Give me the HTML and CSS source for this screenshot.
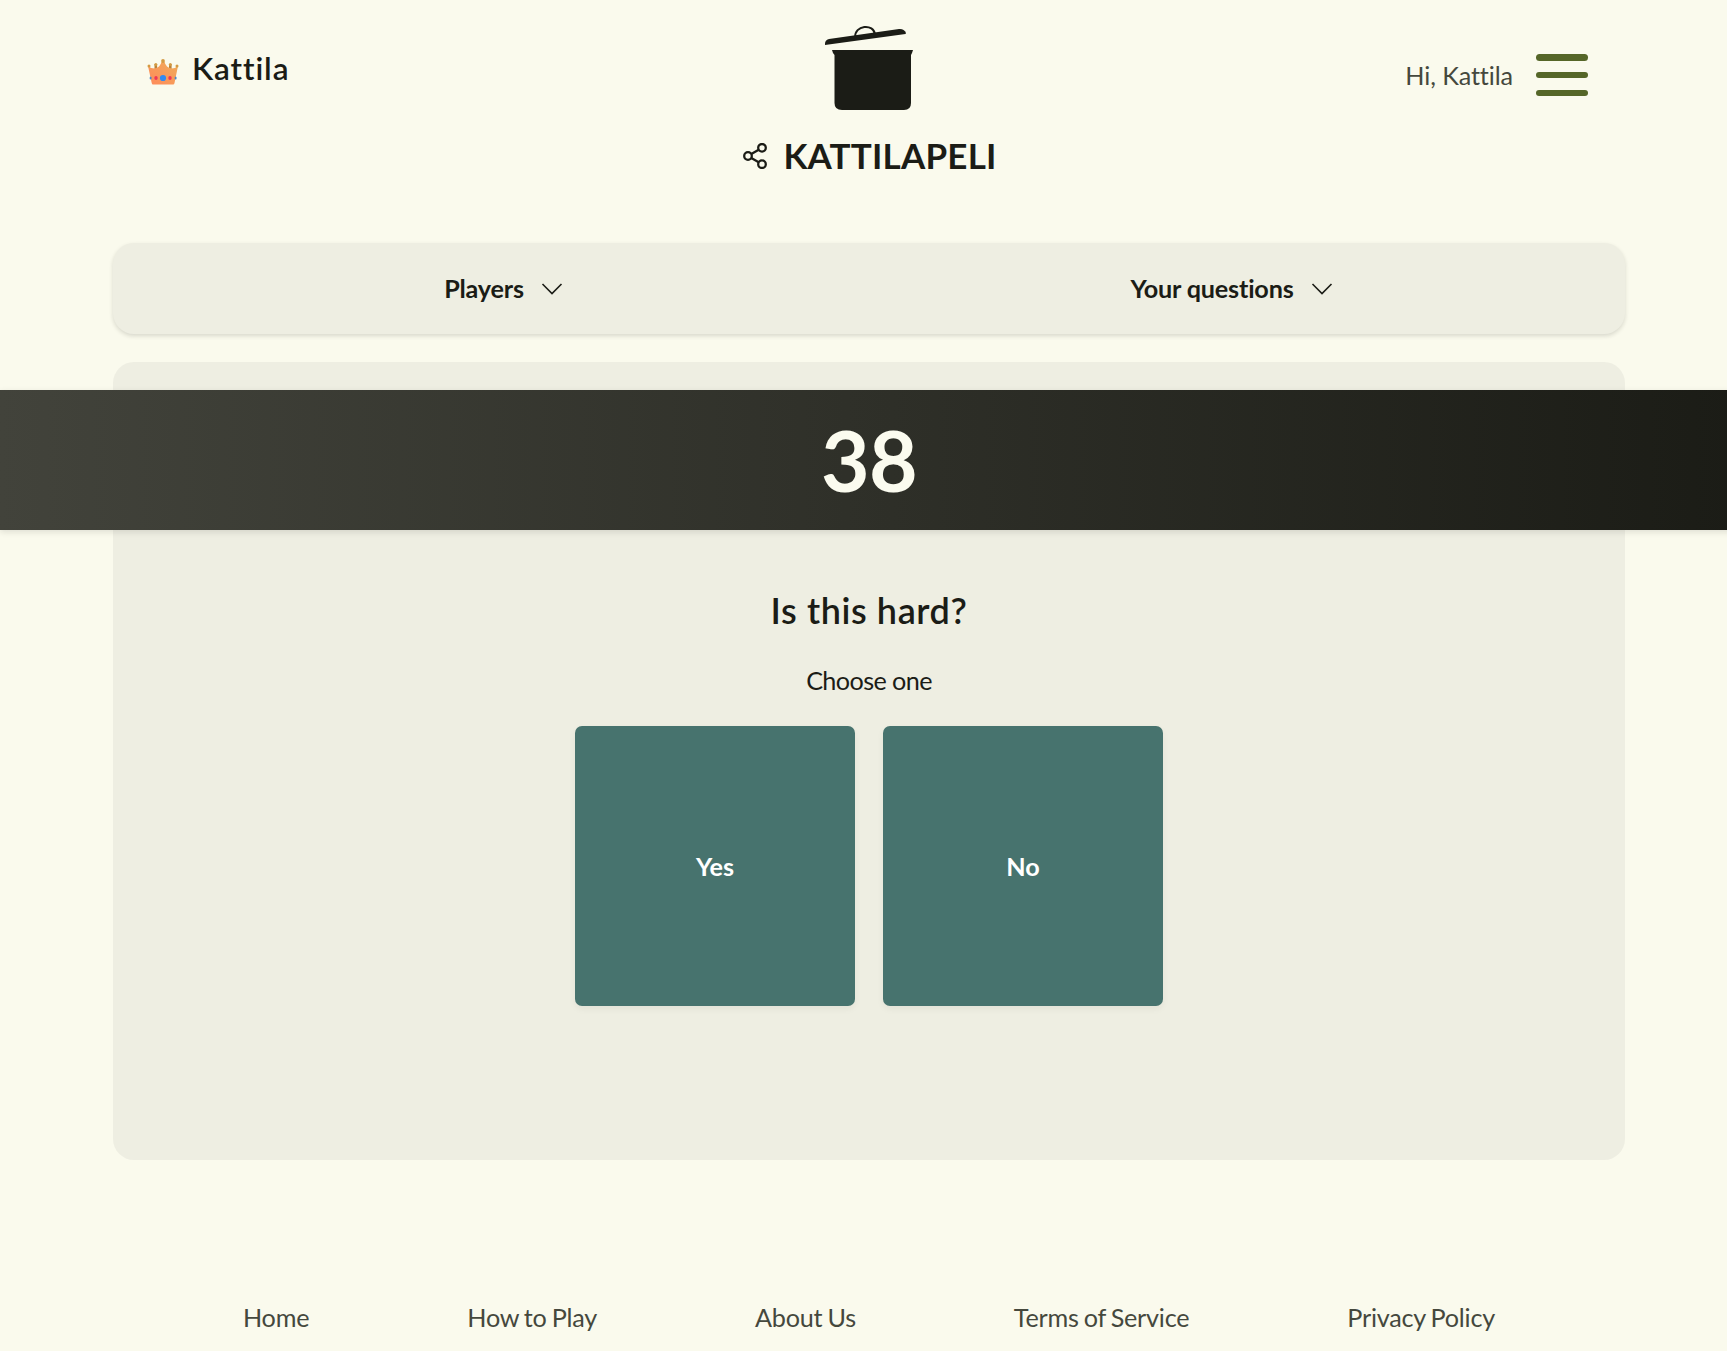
FILE: index.html
```
<!DOCTYPE html>
<html lang="en">
<head>
    <meta charset="UTF-8">
    <meta name="viewport" content="width=device-width, initial-scale=1.0">
    <title>Kattilapeli</title>
    <link rel="stylesheet" href="styles.css">
</head>
<body>
    <div class="container">
        <header class="header">
            <div class="host">
                <svg class="crown" viewBox="0 0 32 28">
                    <defs>
                        <linearGradient id="gold" x1="0" y1="1" x2="1" y2="0">
                            <stop offset="0" stop-color="#ff8a5c"/>
                            <stop offset="1" stop-color="#f0ac58"/>
                        </linearGradient>
                    </defs>
                    <path fill="#b98239" d="M7.500 6h2.600v7H7.500zM22 6h2.600v7H22z"/>
                    <path fill="url(#gold)" d="M1 8Q4 10.500 7.500 10.500Q13 9.500 14.500 4H17.500Q19 9.500 24.500 10.500Q28 10.500 31 8L27.500 25Q27.300 26.500 26 26.500H6Q4.900 26.500 4.700 25Z"/>
                    <g fill="#d39b43"><circle cx="16" cy="3" r="1.900"/><circle cx="8.800" cy="6.500" r="1.500"/><circle cx="23.300" cy="6.500" r="1.500"/><circle cx="2" cy="8" r="1.500"/><circle cx="30" cy="8" r="1.500"/></g>
                    <circle cx="16" cy="20" r="3.100" fill="#338af0"/>
                    <g fill="#ef3658"><ellipse cx="9" cy="20" rx="1.700" ry="2"/><ellipse cx="23" cy="20" rx="1.700" ry="2"/></g>
                    <g fill="#4b86c8"><ellipse cx="3.600" cy="20" rx="1" ry="1.600"/><ellipse cx="28.600" cy="20" rx="1" ry="1.600"/></g>
                </svg>
                <h2 class="host-name">Kattila</h2>
            </div>
            <div class="brand">
                <svg class="pot" viewBox="0 0 90 88">
                    <path d="M1 21Q.5 16 5 15L75 5Q80 4.500 82 9L81.500 10Z"/>
                    <path class="pot-handle" d="M31.200 13.500C30 1 50 -1 51 10.500"/>
                    <path d="M8 26H89L88 29 87 31V79Q87 86 80 86H18Q10.500 86 10.500 79V31L9 29Z"/>
                </svg>
                <div class="title-row">
                    <svg class="share" viewBox="0 0 24 26">
                        <circle cx="5" cy="13" r="3.800"/>
                        <circle cx="19" cy="4.800" r="3.800"/>
                        <circle cx="19" cy="21.200" r="3.800"/>
                        <path d="M8.300 11 15.700 6.700M8.300 15l7.400 4.300"/>
                    </svg>
                    <h1 class="title">KATTILAPELI</h1>
                </div>
            </div>
            <div class="user">
                <span class="greeting">Hi, Kattila</span>
                <button class="menu-btn" aria-label="Menu">
                    <span></span>
                    <span></span>
                    <span></span>
                </button>
            </div>
        </header>

        <nav class="tabs">
            <div class="tab">
                <span>Players</span>
                <svg class="chevron" viewBox="0 0 28 28"><path d="M4.500 9 14 18.500l9.500-9.500"/></svg>
            </div>
            <div class="tab">
                <span>Your questions</span>
                <svg class="chevron" viewBox="0 0 28 28"><path d="M4.500 9 14 18.500l9.500-9.500"/></svg>
            </div>
        </nav>

        <main class="game">
            <div class="timer"><span>38</span></div>
            <h2 class="question">Is this hard?</h2>
            <p class="hint">Choose one</p>
            <div class="answers">
                <button class="answer">Yes</button>
                <button class="answer">No</button>
            </div>
        </main>

        <footer class="footer">
            <a>Home</a>
            <a>How to Play</a>
            <a>About Us</a>
            <a>Terms of Service</a>
            <a>Privacy Policy</a>
        </footer>
    </div>
</body>
</html>
```
FILE: styles.css
```
* {
    box-sizing: border-box;
}
body {
    margin: 0;
    background-color: #fafaed;
    color: #1b1c16;
    font-family: Lato, sans-serif;
    font-size: 25.2px;
    font-variant-ligatures: none;
    line-height: 36px;
    overflow: hidden;
}
h1, h2, p {
    margin: 0;
}
button {
    font: inherit;
    border: none;
    cursor: pointer;
}
.container {
    margin: 0 102px 0 113px;
}

/* Header */
.header {
    display: grid;
    grid-template-columns: 1fr auto 1fr;
    height: 243px;
}
.host {
    display: flex;
    align-items: flex-start;
    padding: 50px 0 0 34px;
}
.crown {
    width: 32px;
    height: 28px;
    margin-top: 8px;
}
.host-name {
    margin-left: 13px;
    font-size: 31.5px;
    font-weight: 600;
    letter-spacing: 0.9px;
}
.brand {
    display: flex;
    flex-direction: column;
    align-items: center;
    padding-top: 24px;
}
.pot {
    width: 90px;
    height: 88px;
    fill: #1b1c16;
}
.pot-handle {
    fill: none;
    stroke: #1b1c16;
    stroke-width: 2;
}
.title-row {
    display: flex;
    align-items: center;
    gap: 16px;
    margin-top: 22px;
    padding-left: 2px;
    height: 44px;
}
.share {
    width: 24px;
    height: 26px;
    fill: none;
    stroke: #1b1c16;
    stroke-width: 2.3;
}
.title {
    padding-bottom: 2px;
    font-size: 35px;
    font-weight: 700;
    letter-spacing: 0.2px;
}
.user {
    display: flex;
    justify-content: flex-end;
    align-items: flex-start;
    padding: 54px 37px 0 0;
}
.greeting {
    margin: 3px 23px 0 0;
    color: #45483d;
    letter-spacing: -0.1px;
}
.menu-btn {
    display: flex;
    flex-direction: column;
    justify-content: space-between;
    width: 52px;
    height: 42px;
    padding: 0;
    background: none;
}
.menu-btn span {
    height: 6.5px;
    border-radius: 4px;
    background-color: #556628;
}

/* Players / questions bar */
.tabs {
    display: grid;
    grid-template-columns: 1fr 1fr;
    height: 91px;
    padding: 0 28px;
    border-radius: 21px;
    background-color: #eeeee2;
    box-shadow: 0 2px 4px rgba(27, 28, 22, 0.15);
}
.tab {
    display: flex;
    align-items: center;
    justify-content: center;
    gap: 14px;
    font-weight: 700;
    letter-spacing: -0.18px;
}
.tab span {
    padding-bottom: 2px;
}
.chevron {
    width: 28px;
    height: 28px;
    fill: none;
    stroke: #1b1c16;
    stroke-width: 1.6;
}

/* Question panel */
.game {
    display: flex;
    flex-direction: column;
    align-items: center;
    height: 798px;
    margin-top: 28px;
    padding-top: 28px;
    border-radius: 21px;
    background-color: #eeeee2;
}
.timer {
    display: flex;
    align-items: center;
    justify-content: center;
    flex-shrink: 0;
    width: 1738px;
    height: 140px;
    background: linear-gradient(to right, #42433b, #1b1c16);
    box-shadow: 0 2px 6px rgba(27, 28, 22, 0.12);
    color: #fbfbef;
    font-size: 84px;
    font-weight: 700;
    letter-spacing: -0.8px;
}
.question {
    margin-top: 58px;
    font-size: 36px;
    font-weight: 600;
    letter-spacing: 0.6px;
    line-height: 44px;
}
.hint {
    margin-top: 30px;
    letter-spacing: -0.6px;
}
.answers {
    display: flex;
    gap: 28px;
    margin-top: 28px;
}
.answer {
    width: 280px;
    height: 280px;
    border-radius: 7px;
    background-color: #47736e;
    box-shadow: 0 3px 7px rgba(27, 28, 22, 0.05);
    color: #fff;
    font-weight: 700;
}

.footer {
    display: flex;
    justify-content: space-between;
    margin-top: 139px;
    padding: 0 130px;
    color: #45483d;
    letter-spacing: -0.22px;
    word-spacing: -1.2px;
}
```
